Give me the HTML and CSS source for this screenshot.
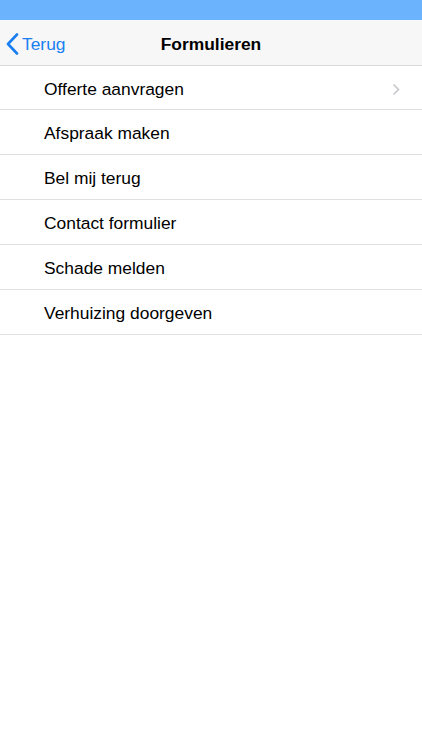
FILE: index.html
```html
<!DOCTYPE html>
<html lang="nl">
<head>
<meta charset="utf-8">
<title>Formulieren</title>
<link rel="stylesheet" href="styles.css">
</head>
<body>
<div class="status"></div>
<header class="nav">
  <a class="back" href="#">
    <svg class="back-icon" width="13" height="22" viewBox="0 0 13 22"><path d="M11 1.5 L2 11 L11 20.5" fill="none" stroke="#1a7ff2" stroke-width="2.6" stroke-linecap="round" stroke-linejoin="round"/></svg>
    <span>Terug</span>
  </a>
  <h1 class="title">Formulieren</h1>
</header>
<ul class="list">
  <li class="row"><span>Offerte aanvragen</span><svg class="chev" width="8" height="13" viewBox="0 0 8 13"><path d="M1.5 1.5 L6.5 6.5 L1.5 11.5" fill="none" stroke="#c7c7cc" stroke-width="1.6"/></svg></li>
  <li class="row"><span>Afspraak maken</span></li>
  <li class="row"><span>Bel mij terug</span></li>
  <li class="row"><span>Contact formulier</span></li>
  <li class="row"><span>Schade melden</span></li>
  <li class="row"><span>Verhuizing doorgeven</span></li>
</ul>
</body>
</html>
```
FILE: styles.css
```css
* { box-sizing: border-box; }
body {
  margin: 0;
  background: #fff;
  font-family: "Liberation Sans", Arial, sans-serif;
  color: #000;
}
.status {
  height: 20px;
  background: #6bb3fc;
}
.nav {
  height: 46px;
  background: #f7f7f7;
  border-bottom: 1px solid #d8d8d8;
  display: flex;
  align-items: center;
  justify-content: center;
  position: relative;
  padding-top: 3px;
}
.back {
  position: absolute;
  left: 6px;
  top: 3px;
  height: 42px;
  display: flex;
  align-items: center;
  gap: 3px;
  color: #1a7ff2;
  text-decoration: none;
  font-size: 17.4px;
}
.back-icon { display: block; }
.title {
  margin: 0;
  font-size: 17.4px;
  font-weight: bold;
}
.list {
  list-style: none;
  margin: 0;
  padding: 0;
}
.row {
  height: 45px;
  border-bottom: 1px solid #e0e0e0;
  display: flex;
  align-items: center;
  justify-content: space-between;
  padding: 3px 22px 0 44px;
  font-size: 17.4px;
}
.row:first-child { height: 44px; }
.chev { display: block; }
```
